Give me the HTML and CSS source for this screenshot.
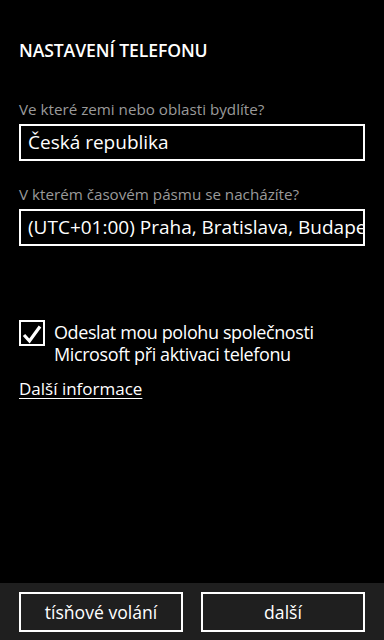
FILE: index.html
```html
<!DOCTYPE html>
<html lang="cs">
<head>
<meta charset="utf-8">
<link rel="stylesheet" href="styles.css">
</head>
<body>
<div class="screen">
  <main class="content">
    <h1 class="title">NASTAVENÍ TELEFONU</h1>
    <div class="label first">Ve které zemi nebo oblasti bydlíte?</div>
    <div class="field">Česká republika</div>
    <div class="label">V kterém časovém pásmu se nacházíte?</div>
    <div class="field">(UTC+01:00) Praha, Bratislava, Budapešť, Bělehrad, Lublaň</div>
    <div class="check-row">
      <span class="checkbox">
        <svg viewBox="0 0 26 26" width="26" height="26"><path d="M5 15 L10.5 21 L21 6.5" fill="none" stroke="#fff" stroke-width="3.2" stroke-linecap="butt" stroke-linejoin="miter"/></svg>
      </span>
      <span class="check-text">Odeslat mou polohu společnosti Microsoft při aktivaci telefonu</span>
    </div>
    <a class="link">Další informace</a>
  </main>
  <footer class="appbar">
    <button class="btn">tísňové volání</button>
    <button class="btn">další</button>
  </footer>
</div>
</body>
</html>
```
FILE: styles.css
```css
html, body {
  margin: 0;
  padding: 0;
  background: #000;
}
body {
  font-family: "Open Sans", "Noto Sans", sans-serif;
  color: #fff;
}
.screen {
  width: 384px;
  height: 640px;
  display: flex;
  flex-direction: column;
  overflow: hidden;
}
.content {
  flex: 1;
  padding: 0 19px 0 19px;
  display: flex;
  flex-direction: column;
  align-items: flex-start;
}
.title {
  margin: 40px 0 0 0;
  font-size: 17.6px;
  line-height: 21px;
  font-weight: 600;
  letter-spacing: -0.1px;
}
.label {
  font-size: 15.2px;
  line-height: 20px;
  color: #9a9a9a;
  margin-top: 23px;
}
.label.first {
  margin-top: 38px;
}
.field {
  box-sizing: border-box;
  width: 346px;
  height: 37px;
  border: 2px solid #fff;
  margin-top: 5px;
  padding: 0 0 0 7px;
  font-size: 19px;
  line-height: 32px;
  white-space: nowrap;
  overflow: hidden;
}
.check-row {
  display: flex;
  align-items: flex-start;
  margin-top: 74px;
}
.checkbox {
  box-sizing: border-box;
  width: 26px;
  height: 26px;
  border: 2px solid #fff;
  flex: none;
  display: flex;
}
.checkbox svg {
  margin: -2px;
}
.check-text {
  margin-left: 9px;
  margin-top: 1px;
  width: 300px;
  font-size: 18px;
  line-height: 22px;
  letter-spacing: -0.4px;
}
.link {
  margin-top: 13px;
  font-size: 17px;
  line-height: 22px;
  text-decoration: underline;
  text-underline-offset: 3px;
  text-decoration-thickness: 1px;
}
.appbar {
  height: 57px;
  background: #1f1f1f;
  display: flex;
  gap: 18px;
  padding: 9px 19px 0 19px;
  box-sizing: border-box;
}
.btn {
  box-sizing: border-box;
  width: 164px;
  height: 40px;
  background: transparent;
  border: 2px solid #fff;
  color: #fff;
  font-family: "Open Sans", "Noto Sans", sans-serif;
  font-size: 17.6px;
  padding: 0;
  line-height: 34px;
}
```
